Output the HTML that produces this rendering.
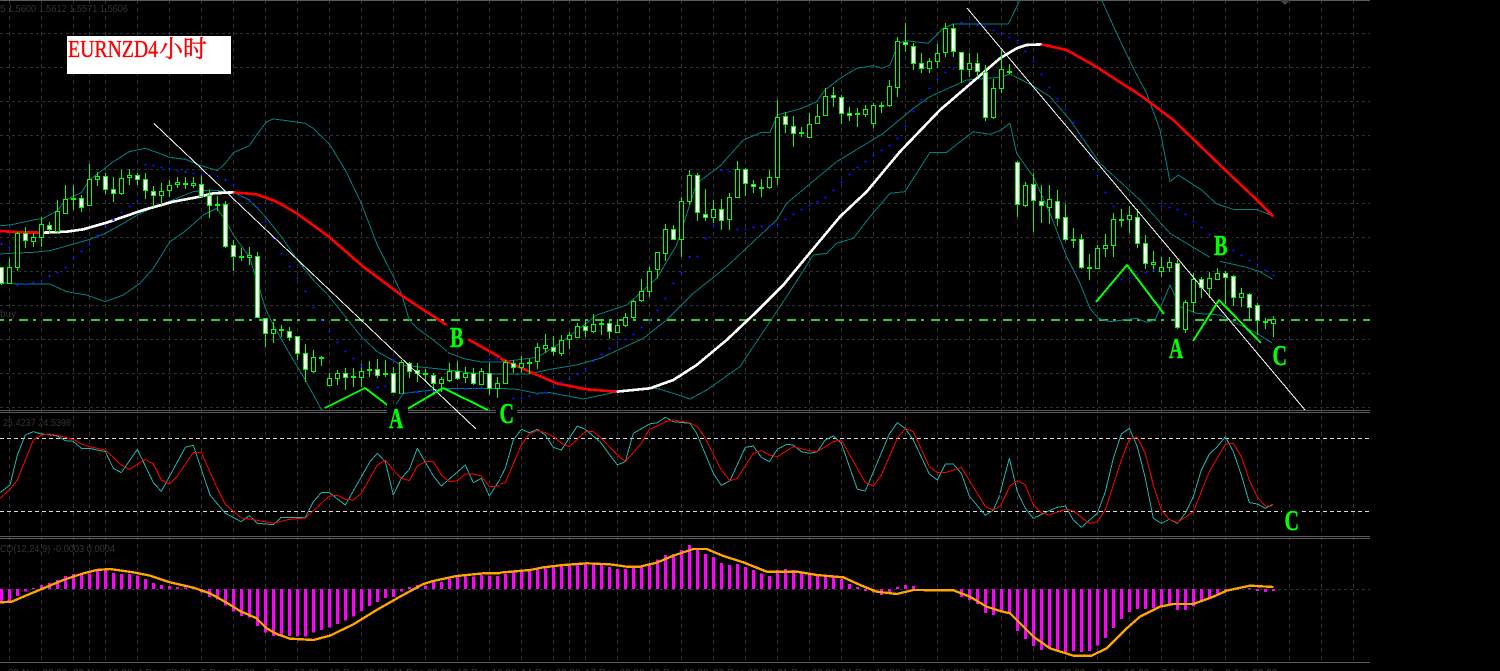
<!DOCTYPE html>
<html><head><meta charset="utf-8"><title>EURNZD 4H</title>
<style>html,body{margin:0;padding:0;background:#000;width:1500px;height:671px;overflow:hidden}svg{display:block}
.p{fill:none;shape-rendering:crispEdges;stroke-linejoin:round}
.dim{font-family:"Liberation Sans",sans-serif;font-size:10px;fill:#333}
.ax{font-family:"Liberation Sans",sans-serif;font-size:10px;fill:#3c3c3c}
.lt{font-family:"Liberation Serif",serif;font-weight:bold;font-size:28px;fill:#00ff00;stroke:#00ff00;stroke-width:.4px}
</style></head><body>
<svg xmlns="http://www.w3.org/2000/svg" width="1500" height="671" viewBox="0 0 1500 671">
<rect width="1500" height="671" fill="#000"/>
<clipPath id="cm"><rect x="0" y="0" width="1370" height="410"/></clipPath>
<clipPath id="cs"><rect x="0" y="413" width="1370" height="123"/></clipPath>

<!-- grid -->
<path class="p" stroke="#263434" stroke-dasharray="3 3" d="M0 33.5H1370M0 67.5H1370M0 101.5H1370M0 135.5H1370M0 169.5H1370M0 203.5H1370M0 237.5H1370M0 271.5H1370M0 305.5H1370M0 339.5H1370M0 373.5H1370M0 407.5H1370M0 589.5H1370"/>
<path class="p" stroke="#333" stroke-dasharray="4 4" d="M9.5 0V662M41.5 0V662M73.5 0V662M89.5 0V662M105.5 0V662M137.5 0V662M169.5 0V662M201.5 0V662M233.5 0V662M265.5 0V662M297.5 0V662M329.5 0V662M361.5 0V662M393.5 0V662M425.5 0V662M457.5 0V662M489.5 0V662M521.5 0V662M553.5 0V662M569.5 0V662M585.5 0V662M617.5 0V662M649.5 0V662M681.5 0V662M713.5 0V662M745.5 0V662M777.5 0V662M809.5 0V662M841.5 0V662M873.5 0V662M905.5 0V662M937.5 0V662M969.5 0V662M1001.5 0V662M1017.5 0V662M1033.5 0V662M1065.5 0V662M1097.5 0V662M1129.5 0V662M1161.5 0V662M1193.5 0V662M1225.5 0V662M1257.5 0V662M1289.5 0V662M1321.5 0V662M1353.5 0V662"/>
<path class="p" stroke="#5a5a5a" d="M0 .5H1370M0 410.5H1370M0 412.5H1370M0 536.5H1370M0 538.5H1370M0 662.5H1370"/>
<path class="p" stroke="#32cd32" stroke-width="2" stroke-dasharray="9 5 3 7" d="M-5 320H1370"/>
<path class="p" stroke="#dcdcdc" stroke-dasharray="4 3" d="M0 438.5H1370M0 511.5H1370"/>

<!-- dim labels -->
<text class="dim" x="0" y="12">5</text>
<text class="dim" x="8" y="12" textLength="120" lengthAdjust="spacingAndGlyphs">1.5600 1.5612 1.5571 1.5606</text>
<text class="dim" x="0" y="317">buy</text>
<text class="dim" x="3" y="426" textLength="68" lengthAdjust="spacingAndGlyphs">25.4237 24.5398</text>
<text class="dim" x="0" y="552" textLength="115" lengthAdjust="spacingAndGlyphs">CD(12,24,9) -0.0003 0.0004</text>
<path d="M1280 0L1290 0L1285 5z" fill="#444"/>
<g class="ax">
<text x="8" y="676">28 Nov 08:00</text><text x="73" y="676">29 Nov 16:00</text><text x="137" y="676">4 Dec 08:00</text><text x="201" y="676">5 Dec 08:00</text><text x="265" y="676">6 Dec 16:00</text><text x="329" y="676">10 Dec 08:00</text><text x="393" y="676">11 Dec 08:00</text><text x="457" y="676">12 Dec 16:00</text><text x="521" y="676">14 Dec 08:00</text><text x="585" y="676">17 Dec 08:00</text><text x="649" y="676">18 Dec 16:00</text><text x="713" y="676">20 Dec 08:00</text><text x="777" y="676">21 Dec 08:00</text><text x="841" y="676">24 Dec 16:00</text><text x="905" y="676">26 Dec 16:00</text><text x="969" y="676">28 Dec 08:00</text><text x="1033" y="676">2 Jan 00:00</text><text x="1097" y="676">3 Jan 16:00</text><text x="1161" y="676">7 Jan 00:00</text><text x="1225" y="676">9 Jan 00:00</text>
</g>

<g clip-path="url(#cm)">
<!-- bands seg 1 -->
<g transform="scale(.33333)" class="p" stroke="#008080" stroke-width="3">
<polyline points="0,677 30,675 100,660 130,655 172,632 196,600 244,578 268,540 292,522 340,485 388,455 436,445 484,462 508,472 556,478 604,497 652,512 676,490 700,458 748,437 770,405 800,365 820,357 868,363 916,370 940,385 988,432 1036,510 1084,610 1132,735 1180,830 1204,880 1228,960 1252,985 1300,1020 1348,1060 1396,1077 1444,1086 1500,1086"/>
<polyline points="0,762 30,760 100,757 150,752 200,738 270,718 316,700 370,670 412,645 460,622 510,603 580,575 630,570 700,576 748,600 796,650 844,710 892,780 940,840 988,890 1036,950 1084,1010 1132,1055 1204,1095 1252,1100 1348,1110 1420,1120 1500,1122"/>
<polyline points="0,848 50,852 150,852 200,875 260,885 315,905 370,885 420,850 460,805 510,725 560,690 610,645 650,625 676,660 700,705 748,770 772,845 796,925 820,975 868,1060 916,1140 964,1228 1030,1300 1130,1300 1210,1180 1340,1165 1500,1165"/>
</g>
<g transform="translate(500 0) scale(.33333)" class="p" stroke="#008080" stroke-width="3">
<polyline points="0,1086 64,1078 112,1072 180,1030 256,972 290,945 380,915 420,880 470,835 530,735 590,550 660,498 730,420 785,397 810,397 832,345 905,325 950,305 975,270 1020,235 1070,205 1120,197 1145,205 1170,195 1195,130 1216,122 1285,130 1330,85 1360,72 1500,72"/>
<polyline points="0,1122 88,1122 150,1108 230,1095 300,1075 430,1015 500,960 580,880 680,800 760,725 830,660 860,610 1010,485 1060,455 1150,400 1240,325 1290,290 1400,240 1500,232"/>
<polyline points="0,1165 50,1168 110,1180 150,1178 250,1197 330,1180 350,1175 440,1165 470,1165 520,1180 570,1197 620,1170 720,1100 800,980 860,890 940,765 980,760 1010,730 1060,715 1110,650 1170,580 1215,575 1290,457 1340,457 1420,395 1470,403 1500,392"/>
</g>
<g transform="translate(1000 0) scale(.33333)" class="p" stroke="#008080" stroke-width="3">
<polyline points="0,72 25,72 60,0 100,-60 280,-60 305,0 350,100 400,205 440,280 480,390 510,545 535,525 605,570 650,612 700,628 770,628 818,648"/>
<polyline points="0,232 30,222 100,258 150,290 210,360 300,490 420,600 510,700 630,772"/>
<polyline points="660,784 740,802 780,815 818,838"/>
<polyline points="0,392 30,370 50,460 100,530 150,640 200,770 240,850 270,925 295,955 330,965 410,955 440,967 465,960 510,855 540,920 590,940 660,945 700,965 770,1000 815,1028"/>
</g>

<!-- MA -->
<g transform="scale(.33333)" class="p" stroke-width="8">
<polyline stroke="#f00" points="0,693 60,697 130,698"/>
<polyline stroke="#f00" points="700,577 770,583 830,605 890,640 980,705 1090,800 1210,890 1340,975"/>
<polyline stroke="#f00" points="1405,1018 1500,1072"/>
<polyline stroke="#fff" points="130,698 200,695 250,688 320,668 430,630 520,605 600,590 640,580 700,577"/>
</g>
<g transform="translate(500 0) scale(.33333)" class="p" stroke-width="8">
<polyline stroke="#f00" points="0,1075 100,1120 170,1150 260,1168 350,1175"/>
<polyline stroke="#fff" points="350,1175 450,1165 520,1140 590,1095 680,1020 770,935 850,855 920,770 1020,650 1100,575 1200,455 1320,330 1500,175"/>
</g>
<g transform="translate(1000 0) scale(.33333)" class="p" stroke-width="8">
<polyline stroke="#fff" points="0,175 50,145 80,135 125,133"/>
<polyline stroke="#f00" points="125,133 200,150 280,195 420,285 520,360 660,495 760,590 820,650"/>
</g>

<!-- candle wicks -->
<path class="p" stroke="#0f0" d="M1.5 268V285M9.5 258V284M17.5 232V271M25.5 227V248M33.5 233V247M41.5 217V247M49.5 222V233M57.5 200V233M65.5 185V214M73.5 185V210M81.5 195V212M89.5 164V206M97.5 172V186M105.5 173V194M113.5 177V202M121.5 170V195M129.5 169V185M137.5 173V185M145.5 173V199M153.5 186V207M161.5 183V205M169.5 180V197M177.5 177V188M185.5 177V189M193.5 177V188M201.5 175V198M209.5 190V218M217.5 196V211M225.5 201V248M233.5 240V271M241.5 248V261M249.5 247V265M257.5 252V318M265.5 318V347M273.5 322V343M281.5 325V337M289.5 327V341M297.5 336V360M305.5 344V382M313.5 350V373M321.5 356V366M329.5 373V386M337.5 370V385M345.5 368V390M353.5 368V387M361.5 364V387M369.5 361V377M377.5 359V378M385.5 360V377M393.5 367V393M401.5 360V394M409.5 362V378M417.5 363V382M425.5 369V382M433.5 373V395M441.5 377V392M449.5 363V382M457.5 361V380M465.5 367V383M473.5 368V385M481.5 368V385M489.5 363V395M497.5 377V398M505.5 360V384M513.5 360V373M521.5 356V373M529.5 359V374M537.5 343V369M545.5 334V353M553.5 336V356M561.5 335V356M569.5 332V349M577.5 323V337M585.5 320V337M593.5 314V333M601.5 319V335M609.5 319V339M617.5 319V333M625.5 313V327M633.5 300V321M641.5 279V302M649.5 267V297M657.5 252V278M665.5 224V261M673.5 225V240M681.5 197V257M689.5 170V205M697.5 173V221M705.5 189V221M713.5 200V223M721.5 199V230M729.5 193V230M737.5 161V198M745.5 168V196M753.5 180V193M761.5 179V197M769.5 170V189M777.5 100V185M785.5 112V133M793.5 116V147M801.5 127V137M809.5 113V137M817.5 104V124M825.5 88V116M833.5 87V107M841.5 95V124M849.5 107V121M857.5 108V127M865.5 105V117M873.5 103V128M881.5 102V113M889.5 80V107M897.5 37V97M905.5 23V52M913.5 43V70M921.5 53V73M929.5 58V73M937.5 44V68M945.5 23V57M953.5 24V57M961.5 52V83M969.5 53V77M977.5 53V77M985.5 65V121M993.5 79V119M1001.5 50V93M1009.5 64V74M1017.5 161V217M1025.5 182V207M1033.5 173V232M1041.5 185V223M1049.5 185V224M1057.5 190V226M1065.5 204V241M1073.5 228V248M1081.5 234V269M1089.5 254V280M1097.5 245V268M1105.5 234V257M1113.5 213V257M1121.5 209V227M1129.5 206V233M1137.5 209V248M1145.5 235V269M1153.5 251V272M1161.5 257V277M1169.5 257V272M1177.5 260V329M1185.5 300V333M1193.5 273V312M1201.5 277V298M1209.5 272V298M1217.5 268V279M1225.5 271V304M1233.5 275V306M1241.5 288V307M1249.5 293V321M1257.5 303V335M1265.5 318V329M1273.5 316V337"/>
<!-- hollow bodies -->
<path class="p" stroke="#0f0" style="fill:#000" d="M7.5 267.5h4v16h-4zM15.5 233.5h4v34h-4zM31.5 237.5h4v4h-4zM39.5 224.5h4v13h-4zM55.5 211.5h4v20h-4zM63.5 199.5h4v14h-4zM71.5 198.5h4v1h-4zM87.5 179.5h4v26h-4zM95.5 176.5h4v3h-4zM119.5 178.5h4v15h-4zM127.5 175.5h4v2h-4zM159.5 191.5h4v4h-4zM167.5 185.5h4v5h-4zM175.5 182.5h4v2h-4zM183.5 183.5h4v1h-4zM191.5 183.5h4v2h-4zM215.5 204.5h4v1h-4zM239.5 256.5h4v1h-4zM247.5 255.5h4v2h-4zM271.5 329.5h4v4h-4zM279.5 329.5h4v1h-4zM311.5 357.5h4v14h-4zM319.5 357.5h4v1h-4zM327.5 378.5h4v7h-4zM335.5 373.5h4v5h-4zM351.5 376.5h4v1h-4zM359.5 371.5h4v6h-4zM367.5 369.5h4v1h-4zM383.5 373.5h4v1h-4zM399.5 362.5h4v31h-4zM423.5 373.5h4v1h-4zM439.5 379.5h4v4h-4zM447.5 371.5h4v9h-4zM463.5 373.5h4v4h-4zM479.5 371.5h4v13h-4zM495.5 383.5h4v5h-4zM503.5 362.5h4v21h-4zM519.5 363.5h4v4h-4zM527.5 362.5h4v1h-4zM535.5 347.5h4v14h-4zM543.5 345.5h4v3h-4zM559.5 340.5h4v13h-4zM567.5 335.5h4v4h-4zM575.5 326.5h4v11h-4zM591.5 324.5h4v7h-4zM599.5 323.5h4v1h-4zM615.5 325.5h4v7h-4zM623.5 317.5h4v8h-4zM631.5 301.5h4v16h-4zM639.5 291.5h4v9h-4zM647.5 271.5h4v20h-4zM655.5 252.5h4v17h-4zM663.5 229.5h4v24h-4zM679.5 201.5h4v38h-4zM687.5 175.5h4v26h-4zM711.5 209.5h4v8h-4zM727.5 197.5h4v22h-4zM735.5 169.5h4v28h-4zM759.5 187.5h4v1h-4zM767.5 177.5h4v10h-4zM775.5 117.5h4v60h-4zM799.5 132.5h4v1h-4zM807.5 124.5h4v13h-4zM815.5 116.5h4v7h-4zM823.5 96.5h4v19h-4zM855.5 113.5h4v1h-4zM863.5 109.5h4v5h-4zM871.5 105.5h4v18h-4zM879.5 105.5h4v1h-4zM887.5 86.5h4v19h-4zM895.5 41.5h4v46h-4zM927.5 61.5h4v7h-4zM935.5 53.5h4v8h-4zM943.5 28.5h4v24h-4zM967.5 63.5h4v6h-4zM991.5 88.5h4v29h-4zM999.5 69.5h4v19h-4zM1007.5 71.5h4v1h-4zM1023.5 185.5h4v20h-4zM1047.5 199.5h4v8h-4zM1071.5 239.5h4v1h-4zM1087.5 267.5h4v1h-4zM1095.5 248.5h4v20h-4zM1103.5 245.5h4v3h-4zM1111.5 219.5h4v26h-4zM1119.5 219.5h4v1h-4zM1127.5 215.5h4v4h-4zM1151.5 262.5h4v2h-4zM1159.5 267.5h4v4h-4zM1167.5 262.5h4v5h-4zM1183.5 302.5h4v27h-4zM1191.5 279.5h4v23h-4zM1207.5 278.5h4v10h-4zM1215.5 273.5h4v6h-4zM1239.5 293.5h4v4h-4zM1263.5 321.5h4v1h-4zM1271.5 319.5h4v4h-4z"/>
<!-- white bodies -->
<path class="p" stroke="#0f0" style="fill:#fff" d="M-.5 267.5h4v16h-4zM23.5 233.5h4v7h-4zM47.5 225.5h4v4h-4zM79.5 198.5h4v9h-4zM103.5 176.5h4v13h-4zM111.5 189.5h4v4h-4zM135.5 175.5h4v4h-4zM143.5 179.5h4v11h-4zM151.5 191.5h4v4h-4zM199.5 184.5h4v12h-4zM207.5 195.5h4v10h-4zM223.5 204.5h4v42h-4zM231.5 245.5h4v11h-4zM255.5 256.5h4v61h-4zM263.5 318.5h4v15h-4zM287.5 331.5h4v6h-4zM295.5 336.5h4v17h-4zM303.5 353.5h4v16h-4zM343.5 373.5h4v4h-4zM375.5 369.5h4v6h-4zM391.5 373.5h4v19h-4zM407.5 363.5h4v8h-4zM415.5 370.5h4v3h-4zM431.5 375.5h4v8h-4zM455.5 371.5h4v7h-4zM471.5 373.5h4v10h-4zM487.5 373.5h4v15h-4zM511.5 363.5h4v4h-4zM551.5 347.5h4v4h-4zM583.5 326.5h4v4h-4zM607.5 323.5h4v8h-4zM671.5 229.5h4v10h-4zM695.5 175.5h4v37h-4zM703.5 214.5h4v3h-4zM719.5 209.5h4v11h-4zM743.5 169.5h4v14h-4zM751.5 184.5h4v2h-4zM783.5 116.5h4v8h-4zM791.5 126.5h4v7h-4zM831.5 95.5h4v2h-4zM839.5 97.5h4v16h-4zM847.5 113.5h4v2h-4zM903.5 42.5h4v2h-4zM911.5 46.5h4v17h-4zM919.5 63.5h4v5h-4zM951.5 28.5h4v23h-4zM959.5 52.5h4v17h-4zM975.5 63.5h4v8h-4zM983.5 72.5h4v45h-4zM1015.5 162.5h4v42h-4zM1031.5 184.5h4v16h-4zM1039.5 201.5h4v4h-4zM1055.5 201.5h4v17h-4zM1063.5 217.5h4v22h-4zM1079.5 239.5h4v28h-4zM1135.5 217.5h4v26h-4zM1143.5 243.5h4v20h-4zM1175.5 263.5h4v64h-4zM1199.5 279.5h4v8h-4zM1223.5 273.5h4v4h-4zM1231.5 276.5h4v21h-4zM1247.5 294.5h4v13h-4zM1255.5 305.5h4v15h-4z"/>

<!-- PSAR dots -->
<g transform="scale(.33333)">
<defs>
<path id="d1" d="M4 732h.1M28 742h.1M52 855h.1M76 853h.1M100 847h.1M124 842h.1M148 828h.1M172 817h.1M196 802h.1M220 775h.1M244 754h.1M268 733h.1M292 707h.1M316 680h.1M340 660h.1M364 637h.1M388 620h.1M412 604h.1M436 493h.1M460 497h.1M484 502h.1M508 506h.1M532 511h.1M556 516h.1M580 520h.1M604 524h.1M628 527h.1M652 530h.1M676 540h.1M700 553h.1M724 590h.1M748 604h.1M772 622h.1M796 664h.1M820 715h.1M844 760h.1M868 800h.1M892 835h.1M916 875h.1M940 922h.1M964 961h.1M988 995h.1M1012 1027h.1M1036 1054h.1M1060 1075h.1M1084 1100h.1M1132 1163h.1M1156 1160h.1M1180 1080h.1M1204 1180h.1M1228 1178h.1M1252 1178h.1M1276 1175h.1M1300 1173h.1M1348 1170h.1M1372 1168h.1M1396 1167h.1M1420 1165h.1M1444 1163h.1M1468 1078h.1M1492 1075h.1"/>
<path id="d2" d="M40 1195h.1M64 1195h.1M88 1190h.1M112 1183h.1M136 1178h.1M160 1162h.1M184 1148h.1M208 1137h.1M232 1123h.1M256 1105h.1M280 1084h.1M304 1063h.1M328 1045h.1M352 1027h.1M376 1018h.1M400 1003h.1M424 983h.1M448 960h.1M472 931h.1M496 895h.1M520 850h.1M544 817h.1M568 771h.1M592 769h.1M616 715h.1M640 677h.1M664 511h.1M688 514h.1M712 688h.1M736 688h.1M760 682h.1M784 679h.1M808 677h.1M832 673h.1M856 658h.1M880 643h.1M904 628h.1M928 616h.1M952 604h.1M976 592h.1M1000 571h.1M1024 547h.1M1048 523h.1M1072 502h.1M1096 484h.1M1120 466h.1M1144 451h.1M1168 436h.1M1192 415h.1M1216 379h.1M1240 334h.1M1264 298h.1M1288 265h.1M1312 238h.1M1336 217h.1M1360 205h.1M1384 67h.1M1408 72h.1M1432 76h.1M1456 79h.1M1480 91h.1"/>
<path id="d3" d="M4 100h.1M28 112h.1M52 122h.1M76 154h.1M100 184h.1M124 223h.1M148 262h.1M172 295h.1M196 328h.1M220 367h.1M244 412h.1M268 469h.1M292 526h.1M316 577h.1M340 619h.1M364 838h.1M388 835h.1M412 823h.1M436 817h.1M460 811h.1M484 619h.1M508 622h.1M532 628h.1M556 643h.1M580 664h.1M604 682h.1M628 703h.1M700 751h.1M724 766h.1M748 781h.1M772 793h.1M796 811h.1M820 826h.1"/>
</defs>
<g fill="none" stroke-linecap="square" shape-rendering="crispEdges">
<g stroke="#0000ff" stroke-width="6"><use href="#d1"/><g transform="translate(1500 0)"><use href="#d2"/></g><g transform="translate(3000 0)"><use href="#d3"/></g></g>
<g stroke="#aab0ff" stroke-width="2"><use href="#d1"/><g transform="translate(1500 0)"><use href="#d2"/></g><g transform="translate(3000 0)"><use href="#d3"/></g></g>
</g>
</g>
</g>

<!-- trendlines -->
<path d="M154 123.5L476 429M967 8L1305 410" stroke="#fff" stroke-width="1" fill="none" class="p"/>

<!-- hand-drawn green ABC -->
<g class="p" stroke="#0f0" stroke-width="2">
<polyline points="325,408 365,388 390,407"/>
<polyline points="404,411 443,388 488,410"/>
<polyline points="1096,302 1127,265 1164,314"/>
<polyline points="1193,341 1219,300 1261,343"/>
</g>

<!-- letters with black halos -->
<rect x="447" y="326" width="21" height="26" fill="#000"/>
<rect x="387" y="404" width="21" height="27" fill="#000"/>
<rect x="496" y="403" width="21" height="24" fill="#000"/>
<rect x="1211" y="234" width="21" height="24" fill="#000"/>
<rect x="1272" y="344" width="18" height="22" fill="#000"/>
<rect x="1282" y="510" width="20" height="24" fill="#000"/>
<rect x="1166" y="336" width="20" height="24" fill="#000"/>
<text class="lt" transform="translate(450 347) scale(.72 1)">B</text>
<text class="lt" transform="translate(389 428) scale(.7 1)">A</text>
<text class="lt" transform="translate(499.500 423) scale(.72 1)">C</text>
<text class="lt" transform="translate(1214 255) scale(.72 1)">B</text>
<text class="lt" transform="translate(1169 358) scale(.7 1)">A</text>
<text class="lt" transform="translate(1272.500 365) scale(.72 1)">C</text>
<text class="lt" transform="translate(1284.500 530) scale(.72 1)">C</text>

<!-- Title box -->
<rect x="67" y="36" width="164" height="38" fill="#fff"/>
<text x="68" y="57" font-family="'Liberation Serif',serif" font-size="24" fill="#f00" stroke="#f00" stroke-width=".35" textLength="90" lengthAdjust="spacingAndGlyphs">EURNZD4</text>
<text x="159" y="57" font-family="'Liberation Serif','Noto Serif CJK SC',serif" font-size="24" fill="#f00" stroke="#f00" stroke-width=".4">小时</text>

<!-- Stochastic -->
<g clip-path="url(#cs)">
<g transform="translate(0 410) scale(.33333)" class="p" stroke-width="3">
<polyline stroke="#20b2aa" points="0,248 30,225 52,135 76,75 100,65 124,72 148,74 172,78 196,92 220,94 244,115 268,115 316,125 340,175 364,188 412,118 460,218 484,244 556,112 580,106 630,255 676,310 724,335 748,317 772,340 820,344 844,322 916,322 940,275 964,248 988,248 1036,285 1110,155 1132,130 1156,155 1180,255 1204,205 1228,178 1252,115 1300,198 1324,228 1396,165 1420,218 1444,205 1468,258 1500,208"/>
<polyline stroke="#f00" points="0,265 30,238 52,210 76,150 100,90 124,75 148,72 172,76 220,88 244,102 268,110 316,120 364,165 388,178 436,148 460,162 484,210 508,222 532,198 580,128 604,128 652,235 676,283 724,324 748,327 772,331 820,340 868,328 916,324 964,280 988,258 1012,256 1036,268 1060,270 1084,250 1132,165 1156,150 1180,180 1204,205 1228,212 1252,168 1276,155 1300,155 1324,195 1348,215 1372,212 1396,192 1420,192 1444,198 1468,230 1500,228"/>
</g>
<g transform="translate(500 410) scale(.33333)" class="p" stroke-width="3">
<polyline stroke="#20b2aa" points="0,205 16,175 40,90 64,58 88,68 112,58 136,75 160,112 184,120 232,48 256,58 300,95 352,165 376,155 400,70 448,42 472,38 496,22 520,35 570,40 590,70 640,190 664,226 690,212 736,112 760,108 784,142 808,155 832,118 860,103 880,105 904,125 930,130 952,125 976,90 1000,78 1024,100 1072,238 1096,243 1168,72 1192,38 1216,55 1240,90 1288,192 1312,210 1336,162 1360,162 1384,190 1408,258 1456,316 1480,300 1500,255"/>
<polyline stroke="#f00" points="0,222 16,218 64,105 88,72 112,62 136,68 160,80 184,100 208,110 256,65 280,65 304,85 352,135 376,155 424,100 448,58 472,48 496,35 520,30 568,38 592,50 616,85 664,180 690,212 712,205 760,130 784,122 808,135 832,140 880,110 928,122 952,125 1000,95 1024,90 1096,218 1120,228 1144,195 1192,85 1216,55 1240,65 1288,170 1312,188 1336,188 1384,172 1432,250 1456,290 1480,300 1500,288"/>
</g>
<g transform="translate(1000 410) scale(.33333)" class="p" stroke-width="3">
<polyline stroke="#20b2aa" points="0,250 28,145 52,245 76,295 100,325 148,302 172,292 196,288 220,330 244,352 292,310 316,245 340,145 364,72 388,55 412,110 436,205 460,325 484,340 508,328 532,340 556,310 580,260 604,180 628,132 652,110 676,80 700,125 724,195 748,278 772,282 796,295 818,283"/>
<polyline stroke="#f00" points="0,290 30,228 52,212 76,225 100,285 124,308 148,315 196,298 220,303 268,340 292,335 316,300 364,150 388,88 412,82 436,130 460,225 484,300 508,328 532,338 580,305 628,185 676,103 700,100 724,140 748,210 772,262 796,288 818,288"/>
</g>
</g>

<!-- MACD bars -->
<g class="p" stroke="#f0f" stroke-width="9" transform="translate(0 410) scale(.33333)">
<path d="M4 537V580M28 537V575M52 537V558M76 537V545M100 537V534M124 537V525M148 537V519M172 537V510M196 537V498M220 537V492M244 537V492M268 537V490M292 537V480M316 537V480M340 537V489M364 537V492M388 537V492M412 537V497M436 537V507M460 537V519M484 537V525M508 537V528M532 537V531M556 537V532M580 537V534M604 537V548M628 537V561M652 537V568M676 537V587M700 537V605M724 537V618M748 537V622M772 537V648M796 537V668M820 537V678M844 537V678M868 537V678M892 537V680M916 537V680M940 537V668M964 537V660M988 537V653M1012 537V642M1036 537V632M1060 537V620M1084 537V603M1108 537V588M1132 537V576M1156 537V564M1180 537V561M1204 537V545M1228 537V531M1252 537V525M1276 537V526M1300 537V515M1324 537V516M1348 537V507M1372 537V500M1396 537V499M1420 537V500M1444 537V495M1468 537V497M1492 537V498"/>
</g>
<g class="p" stroke="#f0f" stroke-width="9" transform="translate(500 410) scale(.33333)">
<path d="M16 537V492M40 537V487M64 537V482M88 537V482M112 537V477M136 537V475M160 537V471M184 537V468M208 537V465M232 537V462M256 537V462M280 537V465M304 537V465M328 537V471M352 537V477M376 537V477M400 537V474M424 537V471M448 537V460M472 537V448M496 537V435M520 537V432M544 537V420M568 537V405M592 537V418M616 537V432M640 537V441M664 537V459M688 537V465M712 537V462M736 537V471M760 537V480M784 537V491M808 537V498M832 537V480M856 537V477M880 537V480M904 537V489M928 537V492M952 537V495M976 537V495M1000 537V498M1024 537V507M1048 537V522M1072 537V531M1096 537V543M1120 537V548M1144 537V555M1168 537V550M1192 537V531M1216 537V525M1240 537V528M1264 537V540M1384 537V561M1408 537V570M1432 537V582M1456 537V609M1480 537V615"/>
</g>
<g class="p" stroke="#f0f" stroke-width="9" transform="translate(1000 410) scale(.33333)">
<path d="M4 537V606M28 537V610M52 537V663M76 537V687M100 537V708M124 537V720M148 537V716M172 537V725M196 537V726M220 537V723M244 537V726M268 537V723M292 537V706M316 537V684M340 537V654M364 537V627M388 537V606M412 537V597M436 537V597M460 537V594M484 537V590M508 537V582M532 537V600M556 537V600M580 537V590M604 537V573M628 537V565M652 537V550M676 537V545M700 537V540M748 537V534M772 537V543M796 537V546M820 537V543"/>
</g>
<!-- MACD signal -->
<g transform="translate(0 410) scale(.33333)" class="p" stroke="#ffa500" stroke-width="7"><polyline points="0,577 35,575 70,560 130,535 190,510 250,490 290,480 330,477 400,487 450,497 510,517 580,533 630,550 680,578 720,603 770,625 800,655 830,672 870,686 940,690 990,677 1060,643 1130,600 1200,560 1270,522 1300,513 1370,498 1450,490 1500,490"/></g>
<g transform="translate(500 410) scale(.33333)" class="p" stroke="#ffa500" stroke-width="7"><polyline points="0,488 90,480 130,472 190,465 260,460 330,463 380,470 420,470 470,458 520,437 580,417 620,417 670,438 730,457 800,485 890,485 950,495 1030,502 1080,525 1130,545 1190,552 1240,540 1360,541 1410,560 1460,590 1500,603"/></g>
<g transform="translate(1000 410) scale(.33333)" class="p" stroke="#ffa500" stroke-width="7"><polyline points="0,603 30,610 100,680 150,715 220,737 275,737 320,715 380,655 420,620 480,590 520,582 580,582 640,560 680,542 750,527 820,531"/></g>
</svg>
</body></html>
